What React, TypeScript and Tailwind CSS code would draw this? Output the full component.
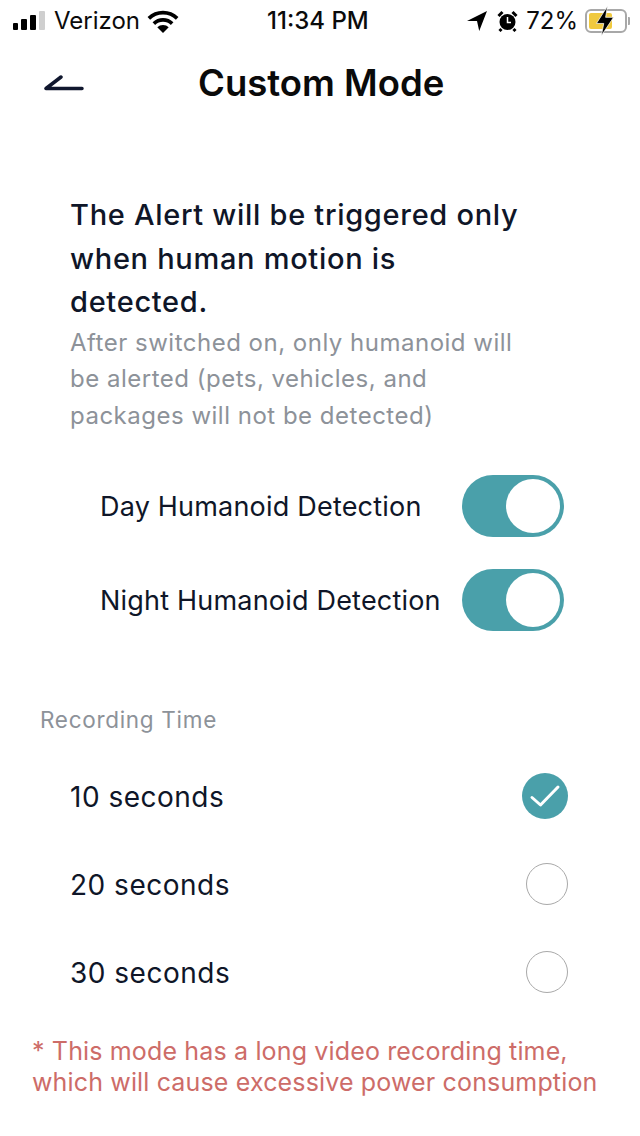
const font = { fontFamily: 'Inter, "Noto Sans", sans-serif' }

function Toggle() {
  return (
    <div className="w-[102px] h-[62px] rounded-full bg-[#4aa0aa] flex items-center justify-end pr-[4px]">
      <div className="w-[54px] h-[54px] rounded-full bg-white" />
    </div>
  )
}

function StatusBar() {
  return (
    <div className="h-[42px] flex items-center justify-between pl-[13px] pr-[13px] text-[#0b0b0b]">
      <div className="flex items-center">
        <div className="flex items-end gap-[3px] h-[20px] pb-[1px]">
          <div className="w-[5px] h-[7px] rounded-[1px] bg-black" />
          <div className="w-[6px] h-[11px] rounded-[1px] bg-black" />
          <div className="w-[6px] h-[15px] rounded-[1px] bg-black" />
          <div className="w-[6px] h-[19px] rounded-[1px] bg-[#cfcfcf]" />
        </div>
        <span className="ml-[9px] text-[24px] leading-none">Verizon</span>
        <svg className="ml-[7px]" width="32" height="24" viewBox="1 0 28 21">
          <path d="M15 21l-5-5a7 7 0 0 1 10 0z" fill="#000" />
          <path d="M7 12.800a11.400 11.400 0 0 1 16 0" fill="none" stroke="#000" strokeWidth="3.200" />
          <path d="M2.600 8.200a17.800 17.800 0 0 1 24.800 0" fill="none" stroke="#000" strokeWidth="3.200" />
        </svg>
      </div>
      <span className="absolute left-[267px] text-[24px] leading-none font-medium">11:34 PM</span>
      <div className="flex items-center">
        <svg width="20" height="20" viewBox="0 0 18 18">
          <path d="M0 9 18 0l-7 18-2-9z" fill="#000" />
        </svg>
        <svg className="ml-[10px]" width="21" height="22" viewBox="0 0 20 22">
          <circle cx="10" cy="12" r="8" fill="#000" />
          <path d="M10 7v5.500h3.500" fill="none" stroke="#fff" strokeWidth="1.500" />
          <path d="M1 6l4-4M19 6l-4-4M4 19l-2 2M16 19l2 2" stroke="#000" strokeWidth="3" />
        </svg>
        <span className="ml-[8px] text-[24px] leading-none">72%</span>
        <div className="ml-[7px] relative w-[42px] h-[24px] rounded-[6px] border-2 border-[#a8a8a8] p-[2px]">
          <div className="w-[23px] h-full rounded-[2px] bg-[#f0c93e]" />
          <svg className="absolute left-[7px] top-[-6px]" width="22" height="32" viewBox="0 0 18 26">
            <path d="M11 1 2 15h6l-2 10 10-15h-6.500z" fill="#000" stroke="#fff" strokeWidth="0.600" />
          </svg>
          <div className="absolute right-[-5px] top-[6px] w-[2px] h-[8px] rounded-r-[1px] bg-[#a8a8a8]" />
        </div>
      </div>
    </div>
  )
}

function Choice({ label, checked }: { label: string; checked?: boolean }) {
  return (
    <div className="h-[88px] flex items-center justify-between pl-[70px] pr-[72px]">
      <span className="mt-[2px] text-[28px] tracking-[0.5px] text-[#0f1628]">{label}</span>
      {checked ? (
        <div className="w-[46px] h-[46px] rounded-full bg-[#4aa0aa] flex items-center justify-center">
          <svg width="32" height="24" viewBox="0 0 32 24">
            <path d="M3 13.500 11.500 21 29 3" fill="none" stroke="#fff" strokeWidth="3" strokeLinecap="round" strokeLinejoin="round" />
          </svg>
        </div>
      ) : (
        <div className="w-[42px] h-[42px] rounded-full border border-[#a9a9a9]" />
      )}
    </div>
  )
}

export default function App() {
  return (
    <div className="w-[640px] h-[1136px] bg-white overflow-hidden relative" style={font}>
      <StatusBar />
      <div className="h-[80px] flex items-center relative">
        <svg className="ml-[44px]" width="40" height="24" viewBox="0 0 40 24">
          <path d="M2 18.500h36M2 18.500 17 7" fill="none" stroke="#10172e" strokeWidth="3.500" strokeLinecap="round" />
        </svg>
        <h1 className="ml-[114px] mt-[2px] text-[36.500px] font-semibold leading-none text-[#0a0a0a]">Custom Mode</h1>
      </div>

      <div className="pl-[70px] pr-[110px] mt-[71px]">
        <p className="text-[29px] leading-[43.500px] font-medium tracking-[0.7px] text-[#0f1628]">
          The Alert will be triggered only when human motion is detected.
        </p>
        <p className="mt-[1px] text-[24px] leading-[36.500px] tracking-[0.5px] text-[#8d9299]">
          After switched on, only humanoid will be alerted (pets, vehicles, and packages will not be detected)
        </p>
      </div>

      <div className="mt-[40.500px] pl-[100px] pr-[76px] flex flex-col gap-[32px]">
        <div className="flex items-center justify-between">
          <span className="mt-[4px] text-[27px] tracking-[0.2px] text-[#0f1628]">Day Humanoid Detection</span>
          <Toggle />
        </div>
        <div className="flex items-center justify-between">
          <span className="mt-[4px] text-[27px] tracking-[0.2px] text-[#0f1628]">Night Humanoid Detection</span>
          <Toggle />
        </div>
      </div>

      <div className="mt-[74px] pl-[40px] text-[22.500px] leading-[30px] tracking-[0.7px] text-[#8d9299]">Recording Time</div>

      <div className="mt-[17px]">
        <Choice label="10 seconds" checked />
        <Choice label="20 seconds" />
        <Choice label="30 seconds" />
      </div>

      <p className="mt-[20px] pl-[32px] text-[25px] leading-[31.500px] tracking-[0.15px] text-[#cd6c68] whitespace-nowrap">
        * This mode has a long video recording time,
        <br />
        which will cause excessive power consumption
      </p>
    </div>
  )
}
